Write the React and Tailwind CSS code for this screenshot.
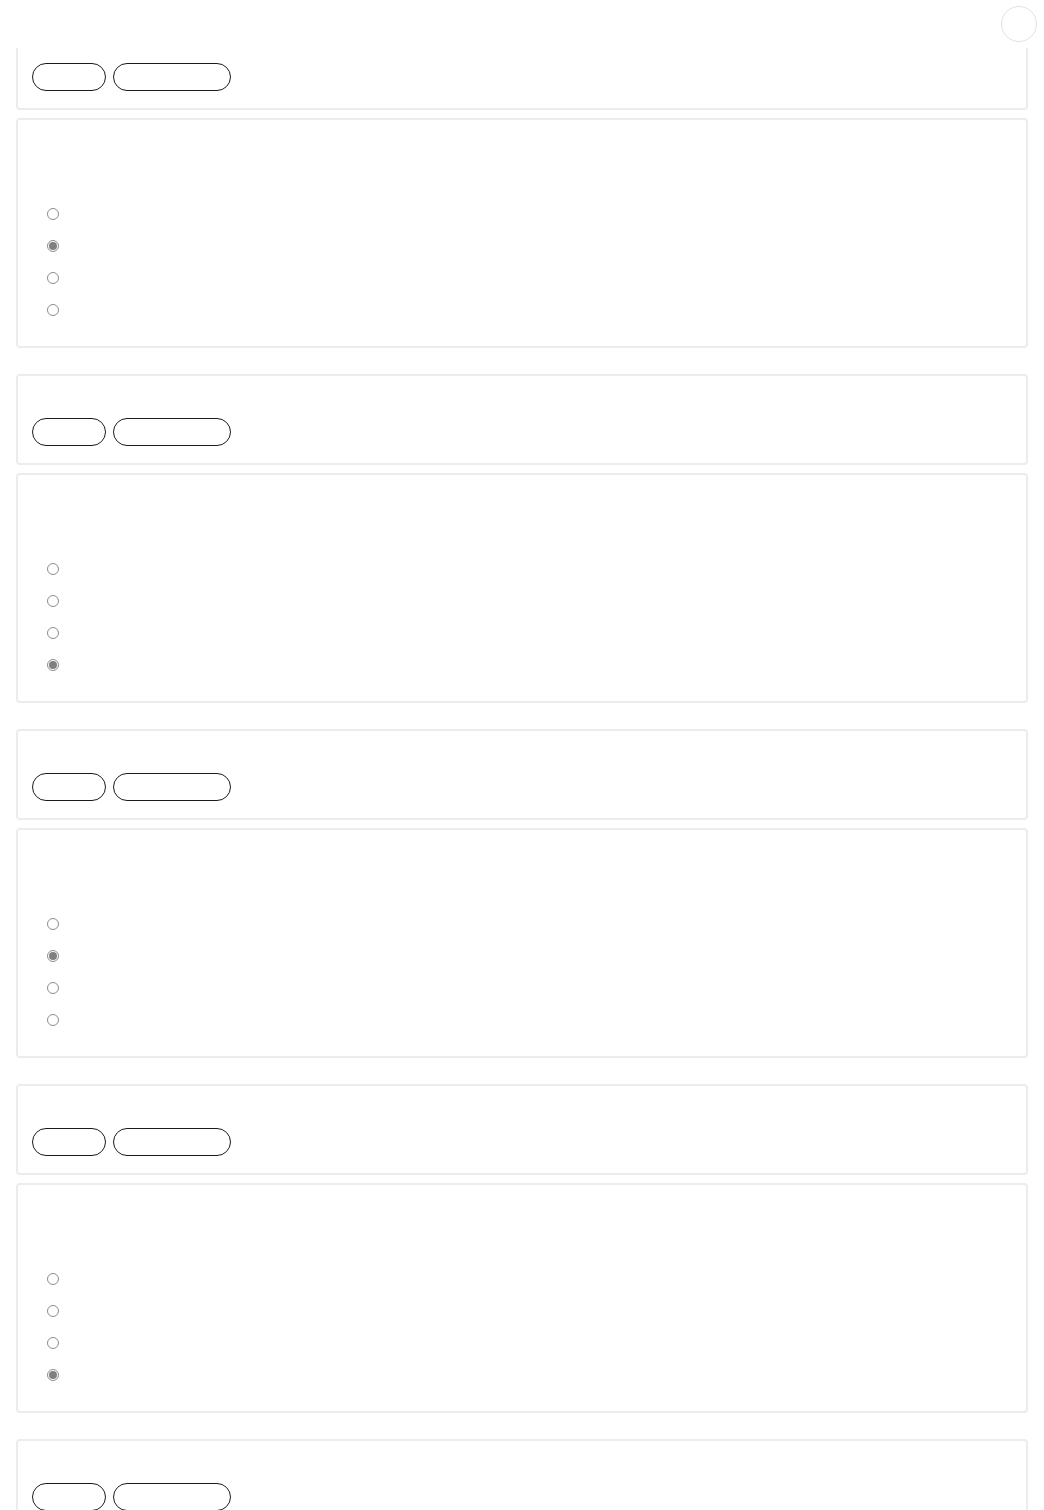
const questions = [
  { id: 1, checked: 1 },
  { id: 2, checked: 3 },
  { id: 3, checked: 1 },
  { id: 4, checked: 3 },
  { id: 5, checked: 0 },
];

const HeaderCard = () => (
  <div className="rounded-[4px] border-2 border-[#ececec] bg-white px-[14px] pb-[17px] pt-[42px]">
    <div className="flex gap-[7px]">
      <span className="block h-7 w-[74px] rounded-full border border-[#1a1a1a]"></span>
      <span className="block h-7 w-[118px] rounded-full border border-[#1a1a1a]"></span>
    </div>
  </div>
);

const Radio = ({ checked }) => (
  <span className="flex h-3 w-3 items-center justify-center rounded-full border border-[#8c8c8c] bg-white">
    {checked && <span className="block h-2 w-2 rounded-full bg-[#808080]"></span>}
  </span>
);

const QuestionCard = ({ checked }) => (
  <div className="rounded-[4px] border-2 border-[#ececec] bg-white pl-[29px] pt-[78px] pb-[20px]">
    {[0, 1, 2, 3].map((i) => (
      <div key={i} className="flex h-8 items-center gap-2">
        <Radio checked={i === checked} />
        <span className="text-sm text-white"> </span>
      </div>
    ))}
  </div>
);

export default function App() {
  return (
    <div className="min-h-screen bg-white" style={{ fontFamily: '"Liberation Sans", Arial, sans-serif' }}>
      {/* top bar */}
      <div className="fixed inset-x-0 top-0 z-10 h-12 bg-white">
        <button className="absolute right-[7px] top-[6px] h-9 w-9 rounded-full border border-[#e2e2e2] bg-white"></button>
      </div>

      <div className="flex flex-col gap-[26px] px-4 pt-[19px]">
        {questions.map((q) => (
          <div key={q.id} className="flex flex-col gap-2">
            <HeaderCard />
            <QuestionCard checked={q.checked} />
          </div>
        ))}
      </div>
    </div>
  );
}
